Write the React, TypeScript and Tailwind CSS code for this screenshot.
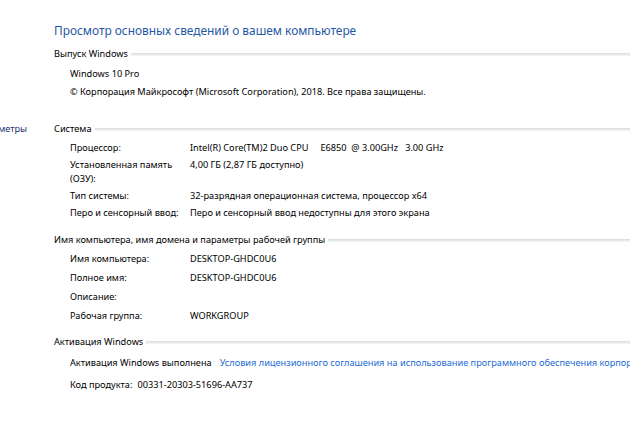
export default function App() {
  const font = { fontFamily: '"Noto Sans", "Open Sans", sans-serif' };

  const SectionHeader = ({ title }: { title: string }) => (
    <div className="flex items-center gap-[3px] leading-[14px] text-[9.2px] text-black whitespace-nowrap">
      <span>{title}</span>
      <div className="flex-1 h-[3px] border-t border-[#dedede] border-b border-b-[#f2f2f2] bg-[#e9e9e9]" />
    </div>
  );

  const Row = ({ label, value }: { label: string; value?: string }) => (
    <div className="flex pl-[16px] leading-[14px] text-[9.2px] text-black">
      <div className="w-[120px] shrink-0">{label}</div>
      <div className="whitespace-pre">{value}</div>
    </div>
  );

  return (
    <div className="w-[630px] h-[436px] bg-white overflow-hidden flex" style={font}>
      {/* left nav, cut off by the screenshot */}
      <div className="w-[54px] shrink-0 overflow-hidden">
        <div className="flex justify-end pr-[27px] pt-[122px] leading-[14px] text-[9.2px] text-[#1d2f6e] whitespace-nowrap">
          <span>Дополнительные параметры</span>
        </div>
      </div>

      <div className="flex-1 min-w-0 pt-[21px]">
        <h1 className="text-[11.9px] leading-[18px] text-[#1f57a4] whitespace-nowrap">
          Просмотр основных сведений о вашем компьютере
        </h1>

        {/* Windows edition */}
        <div className="mt-[8px] flex flex-col">
          <SectionHeader title="Выпуск Windows" />
          <div className="mt-[6px] flex flex-col gap-[4px] pl-[16px] leading-[14px] text-[9.2px] text-black whitespace-nowrap">
            <div>Windows 10 Pro</div>
            <div>© Корпорация Майкрософт (Microsoft Corporation), 2018. Все права защищены.</div>
          </div>
        </div>

        {/* System */}
        <div className="mt-[23px] flex flex-col">
          <SectionHeader title="Система" />
          <div className="mt-[5px] flex flex-col gap-[3px]">
            <Row label="Процессор:" value="Intel(R) Core(TM)2 Duo CPU     E6850  @ 3.00GHz   3.00 GHz" />
            <Row label="Установленная память (ОЗУ):" value="4,00 ГБ (2,87 ГБ доступно)" />
            <Row label="Тип системы:" value="32-разрядная операционная система, процессор x64" />
            <Row label="Перо и сенсорный ввод:" value="Перо и сенсорный ввод недоступны для этого экрана" />
          </div>
        </div>

        {/* Computer name */}
        <div className="mt-[13px] flex flex-col">
          <SectionHeader title="Имя компьютера, имя домена и параметры рабочей группы" />
          <div className="mt-[5px] flex flex-col gap-[5px]">
            <Row label="Имя компьютера:" value="DESKTOP-GHDC0U6" />
            <Row label="Полное имя:" value="DESKTOP-GHDC0U6" />
            <Row label="Описание:" />
            <Row label="Рабочая группа:" value="WORKGROUP" />
          </div>
        </div>

        {/* Activation */}
        <div className="mt-[12px] flex flex-col">
          <SectionHeader title="Активация Windows" />
          <div className="mt-[7px] flex flex-col gap-[8px] pl-[16px] leading-[14px] text-[9.2px] text-black whitespace-nowrap">
            <div className="flex gap-[8px]">
              <span>Активация Windows выполнена</span>
              <a className="text-[#1a6cd4]">
                Условия лицензионного соглашения на использование программного обеспечения корпорации Майкрософт
              </a>
            </div>
            <div className="flex gap-[5px]">
              <span>Код продукта:</span>
              <span>00331-20303-51696-AA737</span>
            </div>
          </div>
        </div>
      </div>
    </div>
  );
}
